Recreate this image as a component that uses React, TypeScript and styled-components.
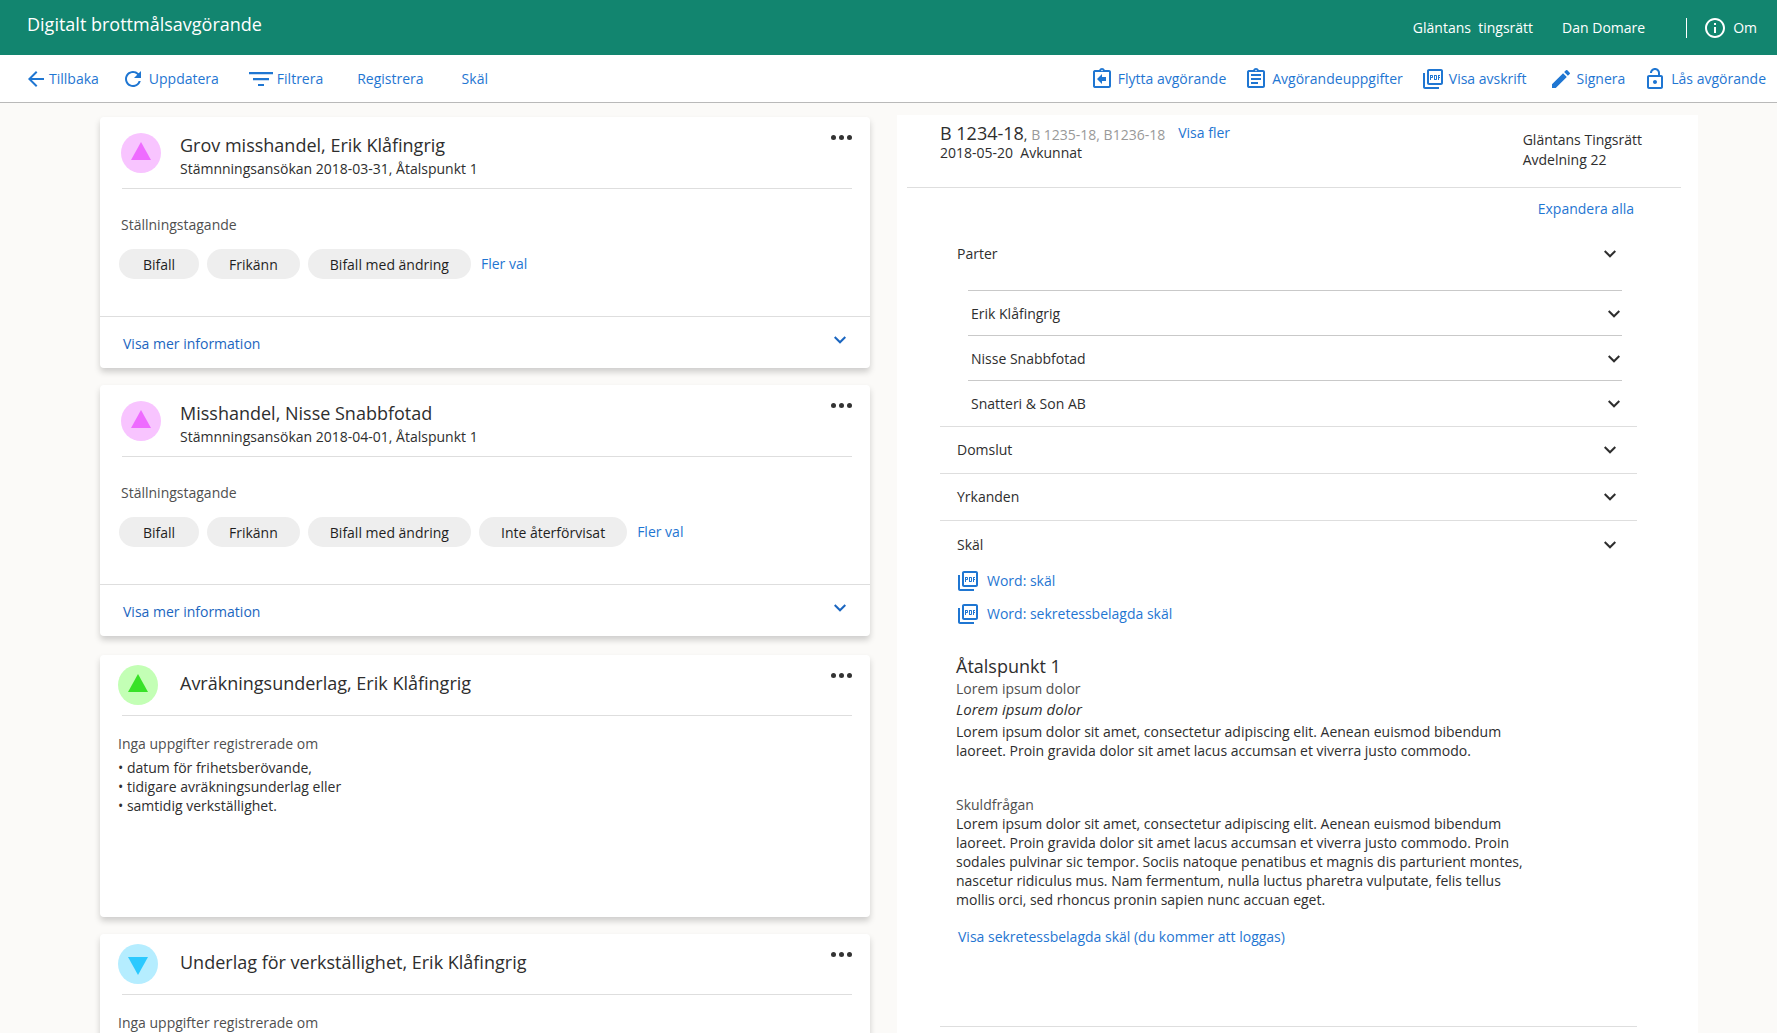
import React from "react";
import styled, { createGlobalStyle, css } from "styled-components";
import {
  MdArrowBack,
  MdEdit,
  MdInfoOutline,
  MdOutlineAssignment,
  MdOutlineAssignmentReturn,
  MdOutlineLockOpen,
  MdOutlinePictureAsPdf,
  MdRefresh,
} from "react-icons/md";

const color = {
  brand: "#12856f",
  page: "#fbfaf8",
  link: "#1f76d2",
  linkDark: "#1b66c0",
  text: "#2e2e2e",
  soft: "#4f4f4f",
  muted: "#999999",
  line: "#dedede",
  lineDark: "#c9c9c9",
};

const GlobalStyle = createGlobalStyle`
  *, *::before, *::after { box-sizing: border-box; }
  body {
    margin: 0;
    background: ${color.page};
    color: ${color.text};
    font-family: "Open Sans", "Noto Sans", sans-serif;
    font-size: 14px;
    line-height: 20px;
  }
  h1, h2, h3, p, ul { margin: 0; padding: 0; font-weight: 400; }
  ul { list-style: none; }
  button {
    margin: 0;
    padding: 0;
    border: 0;
    background: none;
    color: inherit;
    font: inherit;
    text-align: left;
    cursor: pointer;
  }
  svg { display: block; flex: none; }
`;

const Page = styled.div`
  display: flex;
  flex-direction: column;
  height: 100vh;
  overflow: hidden;
`;

/* Header */

const Header = styled.header`
  display: flex;
  flex: none;
  align-items: center;
  justify-content: space-between;
  height: 55px;
  padding: 0 20px 0 27px;
  background: ${color.brand};
  color: #fff;
`;

const AppTitle = styled.h1`
  padding-bottom: 8px;
  font-size: 18px;
  line-height: 24px;
`;

const UserArea = styled.div`
  display: flex;
  align-items: center;
  gap: 29px;
  white-space: pre;
`;

const AboutButton = styled.button`
  display: flex;
  align-items: center;
  gap: 6px;
`;

const AboutArea = styled.div`
  display: flex;
  align-items: center;
  gap: 16px;
  margin-left: 12px;
`;

const HeaderRule = styled.span`
  width: 1px;
  height: 20px;
  background: #fff;
`;

/* Toolbar */

const Toolbar = styled.nav`
  display: flex;
  flex: none;
  align-items: center;
  justify-content: space-between;
  height: 48px;
  padding: 0 11px 0 24px;
  border-bottom: 1px solid #b9b9b9;
  background: #fff;
  color: ${color.link};
`;

const ToolGroup = styled.div<{ $gap: number }>`
  display: flex;
  align-items: center;
  gap: ${(p) => p.$gap}px;
`;

const ToolButton = styled.button<{ $tight?: boolean; $plain?: boolean }>`
  display: flex;
  align-items: center;
  gap: ${(p) => (p.$tight ? 1 : 4)}px;
  padding: 0 ${(p) => (p.$plain ? 4 : 0)}px;
  white-space: nowrap;
`;

/* Columns */

const Columns = styled.main`
  display: grid;
  flex: 1;
  grid-template-columns: minmax(0, 770fr) minmax(0, 801fr);
  column-gap: 27px;
  min-height: 0;
  padding: 0 79px 0 100px;
`;

const CardColumn = styled.div`
  display: flex;
  flex-direction: column;
  gap: 19px;
  padding-top: 14px;
`;

const CardStack = styled.section`
  display: grid;
  gap: 17px;
`;

const Card = styled.article<{ $tall?: boolean }>`
  display: flex;
  flex-direction: column;
  min-height: ${(p) => (p.$tall ? 262 : 0)}px;
  border-radius: 4px;
  background: #fff;
  box-shadow: 0 4px 6px rgba(0, 0, 0, 0.18);
`;

const CardHead = styled.header<{ $compact?: boolean }>`
  display: flex;
  align-items: flex-start;
  height: ${(p) => (p.$compact ? 60 : 71)}px;
  padding: 0 18px 0 ${(p) => (p.$compact ? 18 : 21)}px;
  gap: ${(p) => (p.$compact ? 22 : 19)}px;
`;

const Badge = styled.span<{ $bg: string; $compact?: boolean }>`
  display: flex;
  flex: none;
  justify-content: center;
  width: 40px;
  height: 40px;
  margin-top: ${(p) => (p.$compact ? 10 : 16)}px;
  padding-top: 9px;
  border-radius: 50%;
  background: ${(p) => p.$bg};
`;

const Headings = styled.div`
  display: flex;
  flex: 1;
  flex-direction: column;
  gap: 2px;
  padding-top: 16px;
  line-height: 19px;
`;

const Heading = styled.h2`
  font-size: 18px;
  line-height: 24px;
`;

const MoreButton = styled.button`
  display: flex;
  align-items: center;
  height: 41px;
  color: #333;
`;

const CardRule = styled.div`
  height: 1px;
  margin: 0 18px 0 22px;
  background: ${color.line};
`;

const DecisionBody = styled.div`
  padding: 26px 18px 37px 19px;
`;

const FieldLabel = styled.p`
  padding-left: 2px;
  color: ${color.soft};
`;

const Chips = styled.div`
  display: flex;
  align-items: center;
  gap: 8px;
  margin-top: 14px;
`;

const Chip = styled.button`
  min-width: 80px;
  height: 30px;
  padding: 2px 22px 0;
  border-radius: 15px;
  background: #eeeeee;
  color: #1f1f1f;
  text-align: center;
  white-space: nowrap;
`;

const LinkButton = styled.button`
  color: ${color.link};
  white-space: nowrap;
`;

const ChipLink = styled(LinkButton)`
  padding: 0 2px;
`;

const CardFoot = styled.button`
  display: flex;
  align-items: center;
  justify-content: space-between;
  height: 52px;
  padding: 2px 24px 0 23px;
  border-top: 1px solid ${color.line};
  color: ${color.linkDark};

  svg {
    margin-bottom: 7px;
  }
`;

const BasisBody = styled.div`
  padding: 18px;
`;

const SoftText = styled.p`
  color: ${color.soft};
`;

const BulletList = styled.ul`
  margin-top: 4px;
  line-height: 19px;
`;

/* Case panel */

const CasePanel = styled.section`
  margin-top: 12px;
  background: #fff;
`;

const CaseHead = styled.header`
  display: flex;
  align-items: flex-start;
  justify-content: space-between;
  height: 73px;
  margin: 0 17px 0 10px;
  padding: 8px 39px 0 33px;
  border-bottom: 1px solid ${color.line};
`;

const CaseLine = styled.div`
  display: flex;
  gap: 13px;
`;

const CaseNumber = styled.h2`
  font-size: 18px;
  line-height: 20px;

  small {
    font-size: 14px;
    line-height: 14px;
  }

  em {
    color: ${color.muted};
    font-style: normal;
  }
`;

const CaseDate = styled.p`
  line-height: 19px;
  white-space: pre;
`;

const CaseCourt = styled.p`
  padding-top: 7px;
`;

const CaseBody = styled.div`
  margin: 0 61px 0 43px;
  padding-top: 11px;
`;

const ExpandRow = styled.div`
  display: flex;
  justify-content: flex-end;
  padding-right: 3px;
`;

const Section = styled.section<{ $lined?: boolean }>`
  ${(p) =>
    p.$lined &&
    css`
      border-top: 1px solid ${color.line};
    `}
`;

const SectionToggle = styled.button<{ $height: number }>`
  display: flex;
  align-items: center;
  justify-content: space-between;
  width: 100%;
  height: ${(p) => p.$height}px;
  padding: 0 21px 0 17px;
`;

const PartyList = styled.ul`
  margin: 2px 15px 1px 28px;
`;

const PartyItem = styled.li`
  border-top: 1px solid ${color.lineDark};
`;

const PartyToggle = styled.button`
  display: flex;
  align-items: center;
  justify-content: space-between;
  width: 100%;
  height: 44px;
  padding: 2px 2px 0 3px;
`;

const Reasons = styled.div`
  padding: 0 0 79px 16px;
`;

const Documents = styled.ul`
  display: grid;
  gap: 9px;
`;

const DocumentLink = styled.a`
  display: flex;
  align-items: center;
  gap: 7px;
  color: ${color.link};
  text-decoration: none;
`;

const ReasonTitle = styled(Heading)`
  margin-top: 28px;
`;

const ReasonLine = styled.p<{ $soft?: boolean; $italic?: boolean }>`
  color: ${(p) => (p.$soft ? color.soft : color.text)};
  font-size: ${(p) => (p.$italic ? 15 : 14)}px;
  font-style: ${(p) => (p.$italic ? "italic" : "normal")};
  line-height: 21px;
`;

const Paragraph = styled.p`
  max-width: 572px;
  line-height: 19px;
`;

const FirstParagraph = styled(Paragraph)`
  padding: 2px 0 35px;
`;

const SubTitle = styled.h3`
  color: ${color.soft};
  font-size: 14px;
  line-height: 19px;
`;

const SecretLink = styled(LinkButton)`
  display: block;
  margin-top: 18px;
  padding-left: 2px;
`;

/* Icons */

const Chevron = () => (
  <svg width="12" height="8" viewBox="6 8.3 12 8" fill="currentColor" aria-hidden="true">
    <path d="M16.59 8.59 12 13.17 7.41 8.59 6 10l6 6 6-6z" />
  </svg>
);

const Dots = () => (
  <svg width="21" height="5" viewBox="0 0 21 5" fill="currentColor" aria-hidden="true">
    <circle cx="2.5" cy="2.5" r="2.5" />
    <circle cx="10.5" cy="2.5" r="2.5" />
    <circle cx="18.5" cy="2.5" r="2.5" />
  </svg>
);

const FilterIcon = () => (
  <svg width="24" height="14" viewBox="0 0 24 14" fill="currentColor" aria-hidden="true">
    <path d="M0 0h24v2.3H0zM4 6h16v2.2H4zM9 12h6v2H9z" />
  </svg>
);

const Triangle = ({ fill, down }: { fill: string; down?: boolean }) => (
  <svg width="20" height={down ? 22 : 18} viewBox={down ? "0 -4 20 22" : "0 0 20 18"} aria-hidden="true">
    <path d={down ? "M0 0h20L10 18z" : "M10 0l10 18H0z"} fill={fill} />
  </svg>
);

/* Data */

const decisions = [
  {
    title: "Grov misshandel, Erik Klåfingrig",
    subtitle: "Stämnningsansökan 2018-03-31, Åtalspunkt 1",
    options: ["Bifall", "Frikänn", "Bifall med ändring"],
  },
  {
    title: "Misshandel, Nisse Snabbfotad",
    subtitle: "Stämnningsansökan 2018-04-01, Åtalspunkt 1",
    options: ["Bifall", "Frikänn", "Bifall med ändring", "Inte återförvisat"],
  },
];

const bases = [
  { title: "Avräkningsunderlag, Erik Klåfingrig", bg: "#c3ffb5", fill: "#38e228", down: false },
  { title: "Underlag för verkställighet, Erik Klåfingrig", bg: "#b5edff", fill: "#2bc9ff", down: true },
];

const missing = ["datum för frihetsberövande,", "tidigare avräkningsunderlag eller", "samtidig verkställighet."];

const parties = ["Erik Klåfingrig", "Nisse Snabbfotad", "Snatteri & Son AB"];

export default function App() {
  return (
    <Page>
      <GlobalStyle />
      <Header>
        <AppTitle>Digitalt brottmålsavgörande</AppTitle>
        <UserArea>
          <span>{"Gläntans  tingsrätt"}</span>
          <span>Dan Domare</span>
          <AboutArea>
            <HeaderRule />
            <AboutButton type="button">
              <MdInfoOutline size={24} />
              Om
            </AboutButton>
          </AboutArea>
        </UserArea>
      </Header>

      <Toolbar>
        <ToolGroup $gap={30}>
          <ToolGroup $gap={22}>
            <ToolButton type="button" $tight>
              <MdArrowBack size={24} />
              Tillbaka
            </ToolButton>
            <ToolButton type="button">
              <MdRefresh size={24} />
              Uppdatera
            </ToolButton>
          </ToolGroup>
          <ToolButton type="button">
            <FilterIcon />
            Filtrera
          </ToolButton>
          <ToolButton type="button" $plain>
            Registrera
          </ToolButton>
          <ToolButton type="button" $plain>
            Skäl
          </ToolButton>
        </ToolGroup>
        <ToolGroup $gap={22}>
          <ToolGroup $gap={18}>
            <ToolButton type="button">
              <MdOutlineAssignmentReturn size={24} />
              Flytta avgörande
            </ToolButton>
            <ToolButton type="button">
              <MdOutlineAssignment size={24} />
              Avgörandeuppgifter
            </ToolButton>
            <ToolButton type="button">
              <MdOutlinePictureAsPdf size={24} />
              Visa avskrift
            </ToolButton>
          </ToolGroup>
          <ToolGroup $gap={18}>
            <ToolButton type="button">
              <MdEdit size={24} />
              Signera
            </ToolButton>
            <ToolButton type="button">
              <MdOutlineLockOpen size={24} />
              Lås avgörande
            </ToolButton>
          </ToolGroup>
        </ToolGroup>
      </Toolbar>

      <Columns>
        <CardColumn>
          <CardStack>
            {decisions.map((d) => (
              <Card key={d.title}>
                <CardHead>
                  <Badge $bg="#f8c4ff">
                    <Triangle fill="#ee6bff" />
                  </Badge>
                  <Headings>
                    <Heading>{d.title}</Heading>
                    <p>{d.subtitle}</p>
                  </Headings>
                  <MoreButton type="button" aria-label="Fler åtgärder">
                    <Dots />
                  </MoreButton>
                </CardHead>
                <CardRule />
                <DecisionBody>
                  <FieldLabel>Ställningstagande</FieldLabel>
                  <Chips>
                    {d.options.map((o) => (
                      <Chip type="button" key={o}>
                        {o}
                      </Chip>
                    ))}
                    <ChipLink type="button">Fler val</ChipLink>
                  </Chips>
                </DecisionBody>
                <CardFoot type="button">
                  Visa mer information
                  <Chevron />
                </CardFoot>
              </Card>
            ))}
          </CardStack>
          <CardStack>
            {bases.map((b) => (
              <Card key={b.title} $tall>
                <CardHead $compact>
                  <Badge $bg={b.bg} $compact>
                    <Triangle fill={b.fill} down={b.down} />
                  </Badge>
                  <Headings>
                    <Heading>{b.title}</Heading>
                  </Headings>
                  <MoreButton type="button" aria-label="Fler åtgärder">
                    <Dots />
                  </MoreButton>
                </CardHead>
                <CardRule />
                <BasisBody>
                  <SoftText>Inga uppgifter registrerade om</SoftText>
                  <BulletList>
                    {missing.map((m) => (
                      <li key={m}>{`• ${m}`}</li>
                    ))}
                  </BulletList>
                </BasisBody>
              </Card>
            ))}
          </CardStack>
        </CardColumn>

        <CasePanel>
          <CaseHead>
            <div>
              <CaseLine>
                <CaseNumber>
                  B 1234-18<small>, <em>B 1235-18, B1236-18</em></small>
                </CaseNumber>
                <LinkButton type="button">Visa fler</LinkButton>
              </CaseLine>
              <CaseDate>{"2018-05-20  Avkunnat"}</CaseDate>
            </div>
            <CaseCourt>
              Gläntans Tingsrätt
              <br />
              Avdelning 22
            </CaseCourt>
          </CaseHead>

          <CaseBody>
            <ExpandRow>
              <LinkButton type="button">Expandera alla</LinkButton>
            </ExpandRow>
            <Section>
              <SectionToggle type="button" $height={69}>
                Parter
                <Chevron />
              </SectionToggle>
              <PartyList>
                {parties.map((p) => (
                  <PartyItem key={p}>
                    <PartyToggle type="button">
                      {p}
                      <Chevron />
                    </PartyToggle>
                  </PartyItem>
                ))}
              </PartyList>
            </Section>
            <Section $lined>
              <SectionToggle type="button" $height={46}>
                Domslut
                <Chevron />
              </SectionToggle>
            </Section>
            <Section $lined>
              <SectionToggle type="button" $height={46}>
                Yrkanden
                <Chevron />
              </SectionToggle>
            </Section>
            <Section $lined>
              <SectionToggle type="button" $height={48}>
                Skäl
                <Chevron />
              </SectionToggle>
              <Reasons>
                <Documents>
                  <li>
                    <DocumentLink href="#skal">
                      <MdOutlinePictureAsPdf size={24} />
                      Word: skäl
                    </DocumentLink>
                  </li>
                  <li>
                    <DocumentLink href="#sekretess">
                      <MdOutlinePictureAsPdf size={24} />
                      Word: sekretessbelagda skäl
                    </DocumentLink>
                  </li>
                </Documents>
                <ReasonTitle>Åtalspunkt 1</ReasonTitle>
                <ReasonLine $soft>Lorem ipsum dolor</ReasonLine>
                <ReasonLine $italic>Lorem ipsum dolor</ReasonLine>
                <FirstParagraph>
                  Lorem ipsum dolor sit amet, consectetur adipiscing elit. Aenean euismod bibendum laoreet. Proin gravida
                  dolor sit amet lacus accumsan et viverra justo commodo.
                </FirstParagraph>
                <SubTitle>Skuldfrågan</SubTitle>
                <Paragraph>
                  Lorem ipsum dolor sit amet, consectetur adipiscing elit. Aenean euismod bibendum laoreet. Proin gravida
                  dolor sit amet lacus accumsan et viverra justo commodo. Proin sodales pulvinar sic tempor. Sociis
                  natoque penatibus et magnis dis parturient montes, nascetur ridiculus mus. Nam fermentum, nulla luctus
                  pharetra vulputate, felis tellus mollis orci, sed rhoncus pronin sapien nunc accuan eget.
                </Paragraph>
                <SecretLink type="button">Visa sekretessbelagda skäl (du kommer att loggas)</SecretLink>
              </Reasons>
            </Section>
            <Section $lined />
          </CaseBody>
        </CasePanel>
      </Columns>
    </Page>
  );
}
